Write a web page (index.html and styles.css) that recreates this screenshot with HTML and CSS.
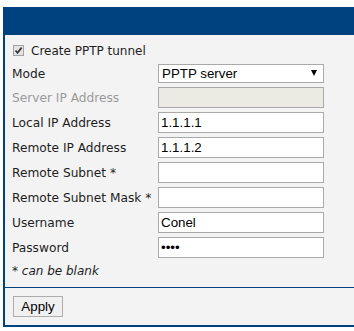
FILE: index.html
```html
<!DOCTYPE html>
<html>
<head>
<meta charset="utf-8">
<link rel="stylesheet" href="styles.css">
</head>
<body>
<div class="panel">
  <div class="header"></div>
  <div class="content">
    <table class="form">
      <tr class="row-check">
        <td colspan="2">
          <label class="check">
            <span class="box"><svg width="11" height="11" viewBox="0 0 11 11"><path d="M2.5 5.5 L4.5 7.8 L8.6 2.6" fill="none" stroke="#3c3c3c" stroke-width="1.8"/></svg></span>
            <span>Create PPTP tunnel</span>
          </label>
        </td>
      </tr>
      <tr class="row-select">
        <td class="lbl">Mode</td>
        <td>
          <div class="select-wrap">
            <select class="field select"><option>PPTP server</option></select>
            <span class="arrow"></span>
          </div>
        </td>
      </tr>
      <tr>
        <td class="lbl disabled">Server IP Address</td>
        <td><input class="field" type="text" disabled></td>
      </tr>
      <tr>
        <td class="lbl">Local IP Address</td>
        <td><input class="field" type="text" value="1.1.1.1"></td>
      </tr>
      <tr>
        <td class="lbl">Remote IP Address</td>
        <td><input class="field" type="text" value="1.1.1.2"></td>
      </tr>
      <tr>
        <td class="lbl">Remote Subnet *</td>
        <td><input class="field" type="text"></td>
      </tr>
      <tr>
        <td class="lbl">Remote Subnet Mask *</td>
        <td><input class="field" type="text"></td>
      </tr>
      <tr>
        <td class="lbl">Username</td>
        <td><input class="field" type="text" value="Conel"></td>
      </tr>
      <tr>
        <td class="lbl">Password</td>
        <td><input class="field" type="password" value="1234"></td>
      </tr>
      <tr class="row-note">
        <td colspan="2" class="note">* can be blank</td>
      </tr>
    </table>
  </div>
  <div class="footer">
    <button class="btn" type="button">Apply</button>
  </div>
</div>
</body>
</html>
```
FILE: styles.css
```css
html, body {
  margin: 0;
  padding: 0;
  background: #ffffff;
  overflow: hidden;
}
body {
  font-family: "DejaVu Sans", Verdana, sans-serif;
  font-size: 12px;
  color: #1e1e1e;
}
.panel {
  margin: 7px 0 0 3px;
  background: #f3f3f3;
  border-left: 2px solid #00427f;
  border-bottom: 2px solid #00427f;
}
.header {
  height: 28px;
  background: #00427f;
  margin-left: -2px;
}
.content {
  padding: 4px 0 6px 7px;
}
.form {
  border-collapse: collapse;
}
.form td {
  padding: 2px 0;
  height: 21px;
  vertical-align: middle;
  line-height: 14px;
}
.form td.lbl {
  width: 146px;
  white-space: nowrap;
  font-size: 12.2px;
}
.lbl.disabled {
  color: #9a9a9a;
}
.row-check td {
  height: 19px;
}
.row-select td {
  height: 19px;
}
.row-note td {
  padding: 0;
  height: 21px;
}
.check {
  display: flex;
  align-items: center;
  gap: 7px;
  padding-left: 1px;
}
.box {
  display: block;
  width: 11px;
  height: 11px;
  box-sizing: border-box;
  border: 1px solid #a3a3a3;
  background: #e4e4e4;
  position: relative;
}
.box svg {
  position: absolute;
  left: -1px;
  top: -1px;
}
.field {
  display: block;
  box-sizing: border-box;
  width: 166px;
  height: 21px;
  margin: 0;
  padding: 0 2px;
  border: 1px solid #a9a9a9;
  background: #ffffff;
  font-family: "Liberation Sans", Arial, sans-serif;
  font-size: 13.33px;
  color: #000000;
  outline: none;
  border-radius: 0;
}
.field:disabled {
  background: #ebebe4;
}
.select-wrap {
  position: relative;
  width: 166px;
}
.select {
  -webkit-appearance: none;
  appearance: none;
  height: 19px;
  padding: 0 3px;
}
.arrow {
  position: absolute;
  right: 7px;
  top: 6px;
  width: 0;
  height: 0;
  border-left: 3px solid transparent;
  border-right: 3px solid transparent;
  border-top: 6px solid #000000;
}
.note {
  font-style: italic;
}
.footer {
  border-top: 1px solid #00427f;
  padding: 8px 0 8px 8px;
}
.btn {
  display: block;
  box-sizing: border-box;
  width: 50px;
  height: 21px;
  margin: 0;
  padding: 0;
  border: 1px solid #adadad;
  background: #f0f0f0;
  font-family: "Liberation Sans", Arial, sans-serif;
  font-size: 13.33px;
  color: #000000;
  border-radius: 0;
}
```
